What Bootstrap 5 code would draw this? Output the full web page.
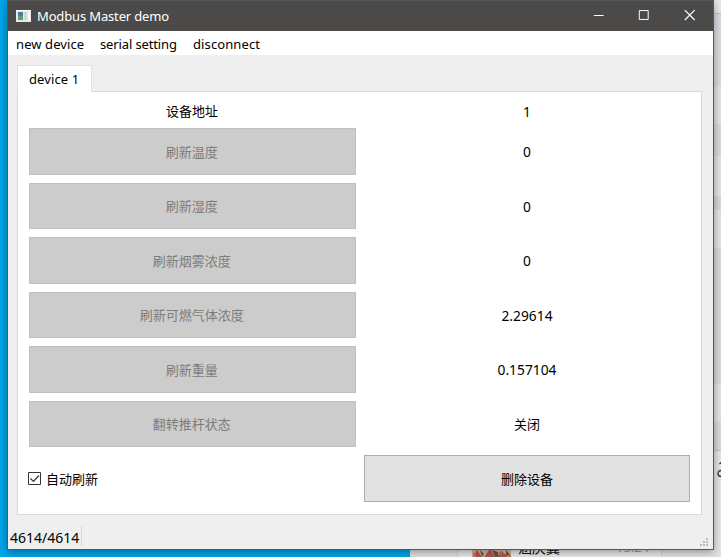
<!DOCTYPE html>
<html lang="zh-CN">
<head>
<meta charset="utf-8">
<title>Modbus Master demo</title>
<link href="https://cdn.jsdelivr.net/npm/bootstrap@5.3.0/dist/css/bootstrap.min.css" rel="stylesheet">
<style>
body{width:721px;height:557px;background:#00a8ec;color:#000;font:13px/18px "Noto Sans","Noto Sans CJK SC",sans-serif}
.strip{left:714px;top:0;width:7px;height:557px;background:linear-gradient(#e9eaec 0 13px,#c5c6c9 13px 14px,#dcdee1 14px 86px,#e6e6e6 86px 124px,#d9dbde 124px 156px,#e6e6e6 156px 196px,#d9dadc 196px 210px,#e6e6e6 210px 248px,#d9dbde 248px 384px,#e6e6e6 384px 422px,#d9dce0 422px 450px,#c7c8ca 450px 451px,#e7e8ec 451px)}
.chat{left:410px;top:549px;width:311px;height:8px;background:#e3e4e6}
.chat-card{left:47px;top:0;width:205px;height:8px;background:#ebebeb;border:solid #d5d5d5;border-width:0 1px}
.avatar{left:14px;top:0}
.chat-name{left:60px;top:-10px;font-size:14px;color:#111}
.chat-time{left:158px;top:-11px;color:#999}
.edge-glyph{left:716px;top:461px}
.win{margin-left:7px;width:707px;height:550px;background:#efefef;border:1px solid #565656;box-shadow:0 2px 9px rgba(0,0,0,.38)}
.titlebar{height:30px;background:#4c4a48;color:#fff;padding:0 1px 0 8px;flex:none}
.caption{margin-left:6px;letter-spacing:-.15px}
.winbtn{width:45.5px;height:30px}
.menubar{height:24px;background:#fff;padding:0 8px;flex:none;line-height:26px}
.menubar span:nth-child(1){width:84px;letter-spacing:.1px}
.menubar span:nth-child(2){width:93px;letter-spacing:-.13px}
.menubar span:nth-child(3){letter-spacing:.1px}
.workspace{padding:10px 11px 0 9px;flex:none}
.tabs{border:0}
.tabs .nav-link{width:75px;height:27px;margin-bottom:-1px;padding:0 0 0 11px;border:1px solid #d9d9d9;border-bottom:0;border-radius:0;background:#fff;color:#000;line-height:26px;letter-spacing:.12px}
.pane{width:685px;height:424px;background:#fff;border:1px solid #d9d9d9;padding:11px}
.fields{display:grid;grid-template-columns:327px 326px;grid-template-rows:17px 47px 46px 47px 46px 47px 46px 47px;gap:8px;text-align:center;align-items:center}
.field-title{margin-left:-1px;margin-top:-1px}
.value{font-size:13.8px;padding-top:1px}
.value-head{padding-top:0}
.fields .btn{height:100%;width:100%;padding:0;border-radius:0;font-size:13px;line-height:18px;color:#000;background:#e1e1e1;border:1px solid #adadad}
.fields .btn:disabled{padding-right:1.5px;background:#ccc;border-color:#bfbfbf;color:#7c7c7c;opacity:1}
.check{gap:5px;margin-left:-1px}
.status{height:23px;padding-left:2px}
.status-text{width:72px;height:20px;border-right:1px solid #d7d7d7;line-height:23px;font-size:14px}
</style>
<script src="https://cdn.jsdelivr.net/npm/bootstrap@5.3.0/dist/js/bootstrap.bundle.min.js"></script>
</head>
<body class="position-relative overflow-hidden">
<div class="strip position-absolute"></div>
<div class="chat position-absolute overflow-hidden">
  <div class="chat-card position-absolute">
    <svg class="avatar position-absolute" width="41" height="8"><path fill="#c9b9a4" d="M0 0h39v8H0z"/><path fill="#b65349" d="M1 8l4-7 5 7zM12 8l6-8 5 8zM26 8l3-6 8 6z"/><path fill="#6b514c" d="M8 1l4 4-2 3zM20 1l6 2 1 5h-4zM34 1l4 5h-4z"/><path fill="#e5684c" d="M1 4h3v4H1zM27 3h3v3h-3zM34 6h5v2h-5z"/></svg>
    <span class="chat-name position-absolute text-nowrap">涵庆冀</span><span class="chat-time position-absolute">15:24</span>
  </div>
</div>
<svg class="edge-glyph position-absolute" width="5" height="18" fill="none" stroke="#333" stroke-width="1.3"><path d="M5 1.500L3.500 3M5 9.500C1 9.500 1 15.500 5 15.500"/></svg>
<main class="win position-relative d-flex flex-column">
  <header class="titlebar d-flex align-items-center">
    <svg width="15" height="12"><path fill="#e8e8e8" d="M0 0h15v12H0z"/><path fill="#fff" d="M0 0h15v1H0z"/><path fill="#4a8199" d="M2 2h5v4H2z"/><path fill="#58a078" d="M2 6h5v4H2z"/><path fill="#d3d6d7" d="M8 2h3v8H8z"/><path fill="#fafafa" d="M12 2h2v8h-2z"/></svg>
    <span class="caption">Modbus Master demo</span>
    <div class="ms-auto d-flex">
      <svg class="winbtn" viewBox="0 0 46 30"><path d="M18 14.500h10" stroke="#fff"/></svg>
      <svg class="winbtn" viewBox="0 0 46 30"><path d="M18.500 9.500h9v9h-9z" fill="none" stroke="#fff"/></svg>
      <svg class="winbtn" viewBox="0 0 46 30"><path d="M18 9l10 10M28 9L18 19" stroke="#fff" stroke-width="1.2"/></svg>
    </div>
  </header>
  <nav class="menubar d-flex"><span>new device</span><span>serial setting</span><span>disconnect</span></nav>
  <section class="workspace">
    <div class="tabs nav nav-tabs"><a class="nav-link active">device 1</a></div>
    <div class="pane">
      <div class="fields">
        <span class="field-title">设备地址</span><span class="value value-head">1</span>
        <button class="btn" disabled>刷新温度</button><span class="value">0</span>
        <button class="btn" disabled>刷新湿度</button><span class="value">0</span>
        <button class="btn" disabled>刷新烟雾浓度</button><span class="value">0</span>
        <button class="btn" disabled>刷新可燃气体浓度</button><span class="value">2.29614</span>
        <button class="btn" disabled>刷新重量</button><span class="value">0.157104</span>
        <button class="btn" disabled>翻转推杆状态</button><span>关闭</span>
        <label class="check d-flex align-items-center"><svg width="13" height="13" fill="none" stroke="#333"><path d="M.5.5h12v12H.5z"/><path d="M2.500 6.500l3 3 5.500-6" stroke-width="1.2"/></svg>自动刷新</label>
        <button class="btn">删除设备</button>
      </div>
    </div>
  </section>
  <footer class="status d-flex mt-auto"><span class="status-text">4614/4614</span>
    <svg class="ms-auto mt-auto" width="13" height="11" fill="#bdbdbd"><path d="M6 0h2v2H6zM3 3h2v2H3zM6 3h2v2H6zM0 6h2v2H0zM3 6h2v2H3zM6 6h2v2H6z"/></svg>
  </footer>
</main>
</body>
</html>
